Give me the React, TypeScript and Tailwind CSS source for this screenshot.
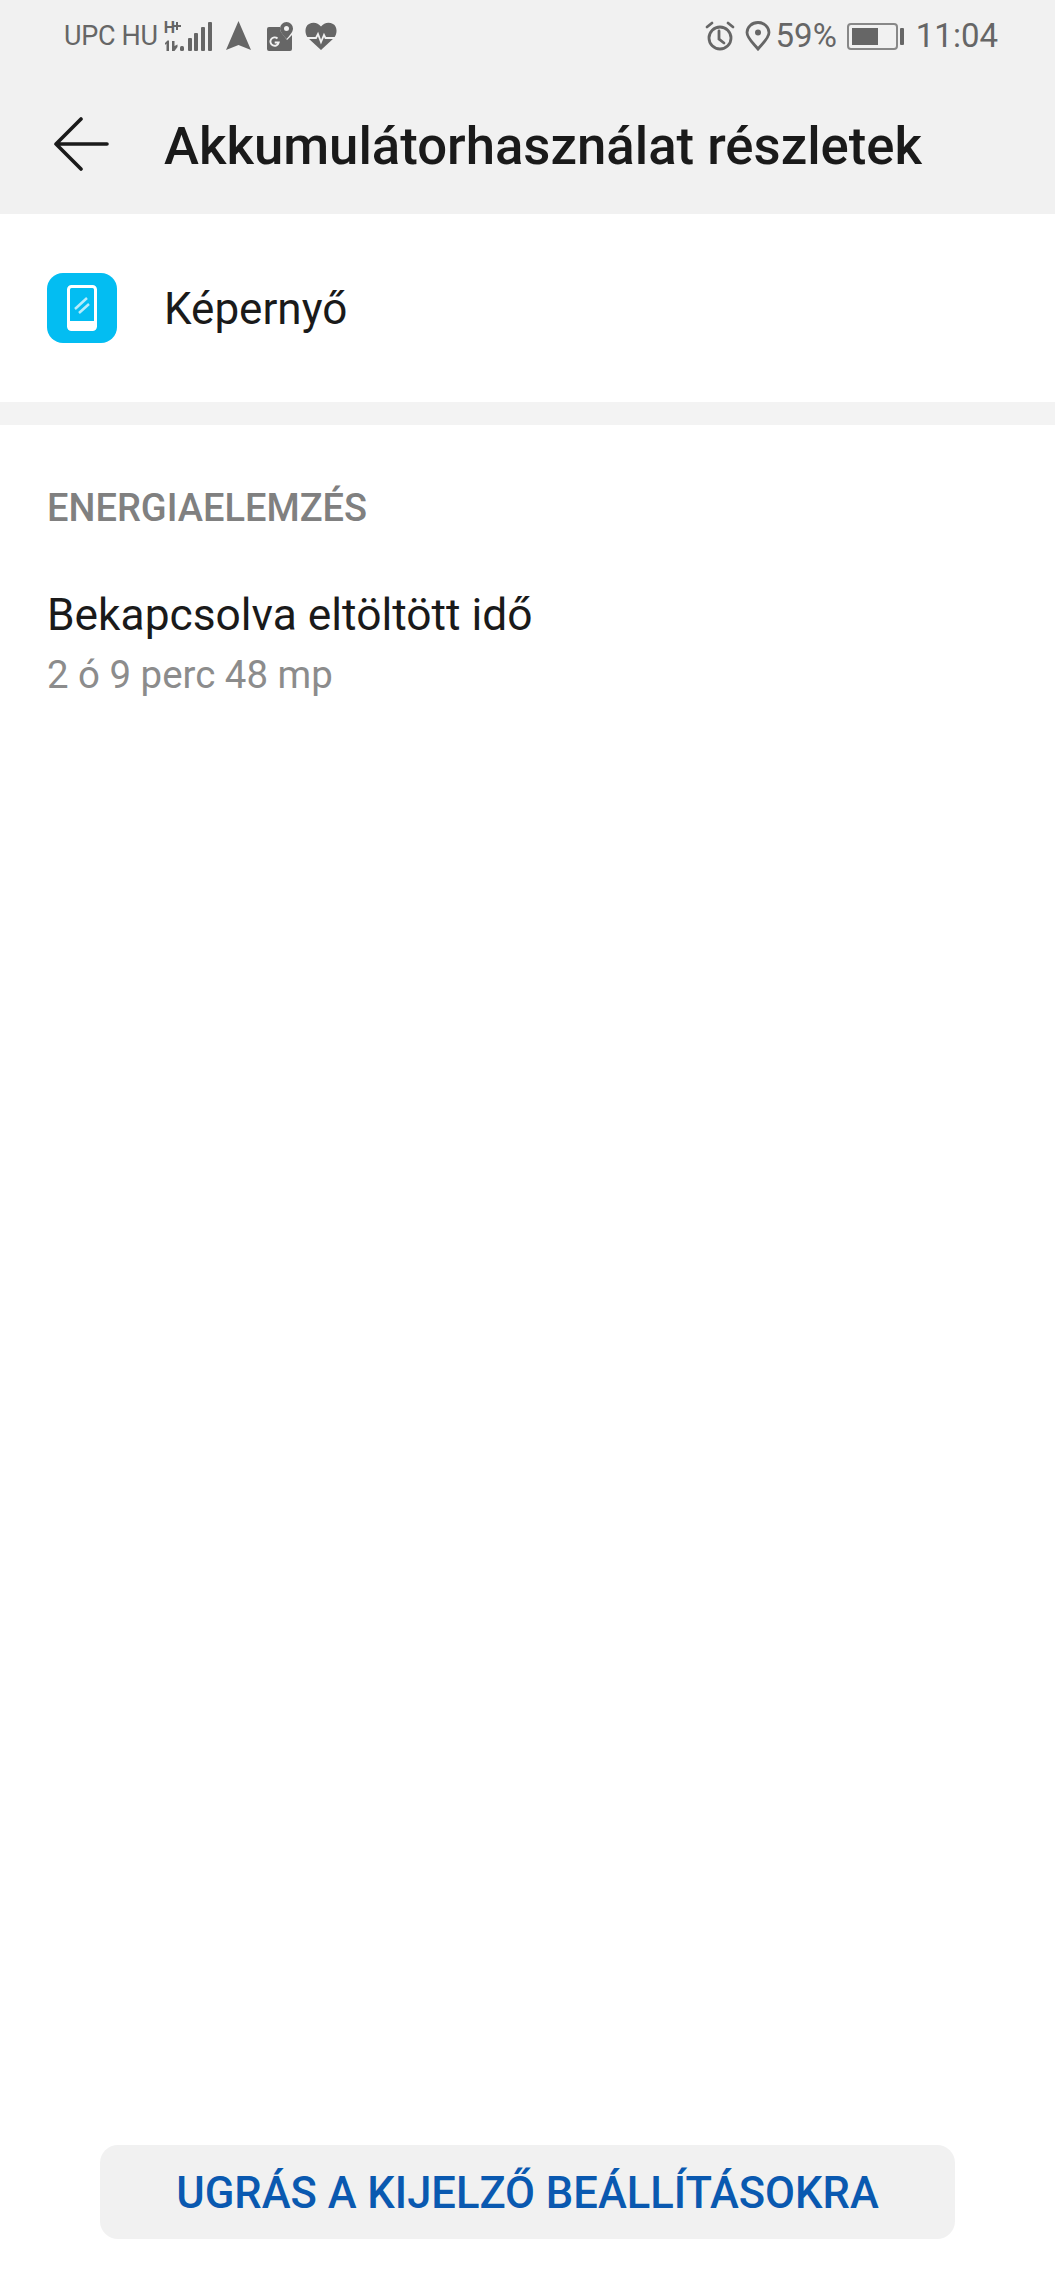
const statusIcons = {
  signal: (
    <svg width="48" height="30" viewBox="0 0 48 30" fill="#666">
      <path d="M12 1h2v3h3v2h-3v3h-2V6H9V4h3z" />
      <path d="M1 22l2.500-2.500H5V30H2.500v-7.500L1 24zM8 20h2.500v5l3-1.500v2.500L10.500 30H8z" />
      <rect x="16" y="25" width="4" height="5" rx="1.500" />
      <rect x="24" y="17" width="4" height="13" rx="1" />
      <rect x="30" y="12" width="4" height="18" rx="1" />
      <rect x="37" y="6" width="4" height="24" rx="1" />
      <rect x="44" y="1" width="4" height="29" rx="1" />
    </svg>
  ),
  nav: (
    <svg width="25" height="30" viewBox="0 0 25 30" fill="#666">
      <path d="M12.500 0 25 29 12.500 24 0 29Z" />
    </svg>
  ),
  maps: (
    <svg width="26" height="29" viewBox="0 0 26 29" fill="#666">
      <path d="M2 5h11a8 8 0 0 0 1 5l6 8 5-5v14a2 2 0 0 1-2 2H2a2 2 0 0 1-2-2V7a2 2 0 0 1 2-2Z" />
      <path fillRule="evenodd" d="M19.500 0a6.500 6.500 0 0 1 6.500 6.500c0 3.500-3.500 7-6.500 10.500-3-3.500-6.500-7-6.500-10.500A6.500 6.500 0 0 1 19.500 0Zm0 4a2.500 2.500 0 1 0 0 5 2.500 2.500 0 0 0 0-5Z" />
      <path d="M10.500 16.500a4.200 4.200 0 1 0 1.200 4h-4" fill="none" stroke="#f1f1f1" strokeWidth="1.900" />
    </svg>
  ),
  heart: (
    <svg width="32" height="28" viewBox="0 0 32 28" fill="#666">
      <path d="M16 28 3 16C-1 11 0 4 4 2c4-2.500 9-1.500 12 2.500C19 .5 24-.5 28 2c4 2 5 9 1 14Z" />
      <path d="M0 16h11l2-4 3 8 3-7 1.500 3H32" fill="none" stroke="#f1f1f1" strokeWidth="1.800" />
    </svg>
  ),
  alarm: (
    <svg width="30" height="30" viewBox="0 0 30 30" fill="none" stroke="#666" strokeWidth="2.800" strokeLinecap="round">
      <circle cx="15" cy="17" r="11" />
      <path d="M14 10v8l5 4M2 6l5-4M28 6l-5-4" />
    </svg>
  ),
  pin: (
    <svg width="26" height="30" viewBox="0 0 26 30" fill="none" stroke="#666" strokeWidth="2.800">
      <path d="M13 28C8 22 2 17 2 11.500a11 10 0 0 1 22 0C24 17 18 22 13 28Z" />
      <circle cx="13" cy="11.500" r="3" fill="#666" stroke="none" />
    </svg>
  ),
};

function StatusBar() {
  return (
    <div className="flex h-[72px] items-center justify-between pl-[64px] pr-[57px] text-[#666]">
      <div className="flex items-center">
        <span className="text-[27px] tracking-[-0.3px]">UPC HU</span>
        <span className="relative ml-[6px] flex">
          {statusIcons.signal}
          <span className="absolute left-0 top-[-1px] text-[16px] font-bold leading-[16px]">H</span>
        </span>
        <span className="ml-[14px] flex">{statusIcons.nav}</span>
        <span className="ml-[16px] flex">{statusIcons.maps}</span>
        <span className="ml-[12px] flex">{statusIcons.heart}</span>
      </div>
      <div className="flex items-center">
        <span className="flex">{statusIcons.alarm}</span>
        <span className="ml-[10px] flex">{statusIcons.pin}</span>
        <span className="ml-[5px] text-[33px]">59%</span>
        <div className="ml-[10px] flex h-[27px] w-[51px] items-center rounded-[4px] border-2 border-[#888] p-[3px]">
          <div className="h-full w-[26px] bg-[#666]" />
        </div>
        <div className="ml-[2px] h-[17px] w-[4px] rounded-[1px] bg-[#666]" />
        <span className="ml-[12px] text-[33px]">11:04</span>
      </div>
    </div>
  );
}

export default function App() {
  return (
    <div className="flex h-[2286px] w-[1055px] flex-col overflow-hidden bg-white font-['Roboto',sans-serif]">
      {/* Header */}
      <div className="h-[214px] bg-[#f1f1f1]">
        <StatusBar />
        <div className="flex h-[142px] items-center pl-[54px] pt-[2px]">
          <svg width="55" height="54" viewBox="0 0 55 54" fill="none" stroke="#1a1a1a" strokeWidth="3.600" strokeLinecap="round" strokeLinejoin="round">
            <path d="M53 27H2M27 2 2 27l25 25" />
          </svg>
          <h1 className="ml-[55px] pt-[5px] text-[52.700px] font-medium text-[#1a1a1a]">Akkumulátorhasználat részletek</h1>
        </div>
      </div>

      {/* Row */}
      <div className="flex h-[188px] items-center pl-[47px]">
        <div className="flex h-[70px] w-[70px] items-center justify-center rounded-[16px] bg-[#03bdf2]">
          <svg width="30" height="46" viewBox="0 0 30 46" fill="none">
            <rect x="1.500" y="1.500" width="27" height="43" rx="3" stroke="#fff" strokeWidth="3" />
            <rect x="1.500" y="36" width="27" height="8.500" fill="#fff" />
            <path d="M8 24 20 13M12 28 22 19" stroke="#b8ecfb" strokeWidth="2.500" />
          </svg>
        </div>
        <span className="ml-[47px] pt-[2px] text-[44px] text-[#1a1a1a]">Képernyő</span>
      </div>

      <div className="h-[23px] bg-[#f3f3f3]" />

      {/* Energy analysis */}
      <div className="px-[47px] pt-[60px]">
        <div className="text-[38px] font-medium leading-[46px] text-[#808080]">ENERGIAELEMZÉS</div>
        <div className="mt-[56px] text-[44.300px] leading-[56px] text-[#1a1a1a]">Bekapcsolva eltöltött idő</div>
        <div className="mt-[8px] text-[38.400px] leading-[48px] text-[#8c8c8c]">2 ó 9 perc 48 mp</div>
      </div>

      <div className="mt-auto px-[100px] pb-[47px]">
        <button className="h-[94px] w-full rounded-[18px] bg-[#f1f1f1] pt-[4px] text-[43.500px] font-medium text-[#0a59b0]">
          UGRÁS A KIJELZŐ BEÁLLÍTÁSOKRA
        </button>
      </div>
    </div>
  );
}
